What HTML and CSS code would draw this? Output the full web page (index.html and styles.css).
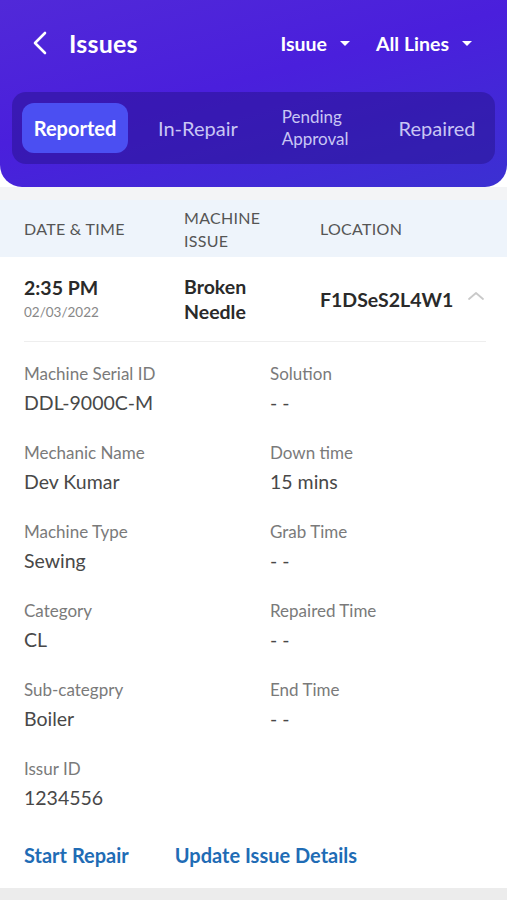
FILE: index.html
```html
<!DOCTYPE html>
<html>
<head>
<meta charset="utf-8">
<link rel="stylesheet" href="styles.css">
</head>
<body>
<div class="screen">
  <header class="hero">
    <div class="topbar">
      <div class="title-wrap">
        <svg class="back" width="16" height="24" viewBox="0 0 16 24"><path d="M13 2 L3 12 L13 22" fill="none" stroke="#fff" stroke-width="2.6" stroke-linecap="round" stroke-linejoin="round"/></svg>
        <span class="title">Issues</span>
      </div>
      <div class="filters">
        <span class="filter">Isuue <i class="caret"></i></span>
        <span class="filter">All Lines <i class="caret"></i></span>
      </div>
    </div>
    <nav class="tabs">
      <span class="tab active">Reported</span>
      <span class="tab">In-Repair</span>
      <span class="tab two">Pending<br>Approval</span>
      <span class="tab">Repaired</span>
    </nav>
  </header>
  <div class="gap"></div>
  <div class="thead">
    <span class="c1">DATE &amp; TIME</span>
    <span class="c2">MACHINE<br>ISSUE</span>
    <span class="c3">LOCATION</span>
  </div>
  <div class="row">
    <div class="c1">
      <div class="strong">2:35 PM</div>
      <div class="date">02/03/2022</div>
    </div>
    <div class="c2 strong">Broken<br>Needle</div>
    <div class="c3 strong">F1DSeS2L4W1</div>
    <svg class="chev" width="18" height="10" viewBox="0 0 18 10"><path d="M2 8 L9 2 L16 8" fill="none" stroke="#c9c9c9" stroke-width="1.8" stroke-linecap="round" stroke-linejoin="round"/></svg>
  </div>
  <div class="details">
    <div class="field"><div class="lbl">Machine Serial ID</div><div class="val">DDL-9000C-M</div></div>
    <div class="field"><div class="lbl">Solution</div><div class="val">- -</div></div>
    <div class="field"><div class="lbl">Mechanic Name</div><div class="val">Dev Kumar</div></div>
    <div class="field"><div class="lbl">Down time</div><div class="val">15 mins</div></div>
    <div class="field"><div class="lbl">Machine Type</div><div class="val">Sewing</div></div>
    <div class="field"><div class="lbl">Grab Time</div><div class="val">- -</div></div>
    <div class="field"><div class="lbl">Category</div><div class="val">CL</div></div>
    <div class="field"><div class="lbl">Repaired Time</div><div class="val">- -</div></div>
    <div class="field"><div class="lbl">Sub-categpry</div><div class="val">Boiler</div></div>
    <div class="field"><div class="lbl">End Time</div><div class="val">- -</div></div>
    <div class="field"><div class="lbl">Issur ID</div><div class="val">1234556</div></div>
  </div>
  <div class="actions">
    <span class="act">Start Repair</span>
    <span class="act">Update Issue Details</span>
  </div>
  <div class="footer"></div>
</div>
</body>
</html>
```
FILE: styles.css
```css
* { box-sizing: border-box; }
html, body { margin: 0; padding: 0; background: #fff; }
body { font-family: Lato, "Open Sans", sans-serif; color: #333; }
.screen { width: 507px; height: 900px; overflow: hidden; display: flex; flex-direction: column; }

.hero {
  height: 187px;
  background: linear-gradient(165deg, #5129d8 0%, #4a1fdc 45%, #3b30d2 100%);
  border-radius: 0 0 22px 22px;
  padding: 23px 12px 0 12px;
  display: flex; flex-direction: column;
}
.topbar { display: flex; justify-content: space-between; align-items: center; height: 40px; padding: 0 0 0 20px; }
.title-wrap { display: flex; align-items: center; gap: 21px; }
.back { display: block; }
.title { color: #fff; font-size: 25px; font-weight: 700; letter-spacing: 0.2px; }
.filters { display: flex; gap: 26px; padding-right: 23px; }
.filter { color: #fff; font-size: 19.5px; font-weight: 700; display: flex; align-items: center; gap: 13px; }
.caret { width: 0; height: 0; border-left: 5px solid transparent; border-right: 5px solid transparent; border-top: 5px solid #fff; display: inline-block; }

.tabs {
  margin-top: 29px;
  height: 72px;
  background: rgba(35, 15, 130, 0.45);
  border-radius: 14px;
  display: flex; align-items: center;
  padding: 0 10px;
}
.tab { color: #c9c6f4; font-size: 20px; text-align: center; line-height: 22px; }
.tab.active { background: #4b4ff2; color: #fff; font-weight: 700; width: 106px; height: 50px; border-radius: 12px; display: flex; align-items: center; justify-content: center; }
.tab:nth-child(2) { margin-left: 30px; }
.tab.two { font-size: 17px; margin-left: 44px; text-align: left; }
.tab:nth-child(4) { margin-left: 50px; }

.gap { height: 13px; background: #f3f4f6; }
.thead {
  height: 57px; background: #eef4fb;
  display: flex; align-items: center; padding-left: 24px;
  color: #555; font-size: 16px; letter-spacing: 0.3px; line-height: 23px;
}
.thead .c1 { width: 160px; }
.thead .c2 { width: 136px; }

.row {
  height: 85px; margin: 0 21px 0 24px; border-bottom: 1px solid #eeeeee;
  display: flex; align-items: center; position: relative;
}
.row .c1 { width: 160px; margin-top: -2px; }
.row .c2 { width: 136px; line-height: 25px; margin-top: -1px; }
.strong { font-size: 19.5px; font-weight: 700; color: #2a2a2a; }
.date { font-size: 13.5px; color: #888; margin-top: 5px; }
.chev { margin-left: 14px; margin-top: -6px; }

.details {
  padding: 21px 24px 0 24px;
  display: grid; grid-template-columns: 246px 1fr; row-gap: 27px;
}
.lbl { font-size: 17px; color: #7a7a7a; line-height: 21px; }
.val { font-size: 19.5px; color: #484848; line-height: 25px; margin-top: 6px; }

.actions { display: flex; gap: 46px; padding: 33px 24px 0 24px; }
.act { color: #1f6cb5; font-size: 20px; font-weight: 700; }
.footer { margin-top: auto; height: 12px; background: #ececec; }
```
